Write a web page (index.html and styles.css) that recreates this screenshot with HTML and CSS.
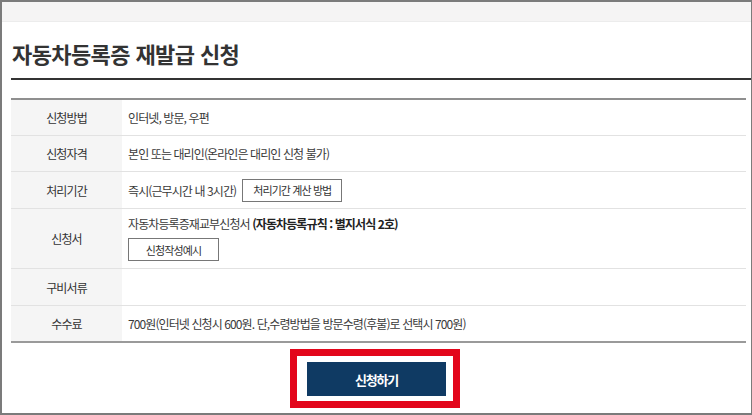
FILE: index.html
```html
<!DOCTYPE html>
<html lang="ko">
<head>
<meta charset="utf-8">
<title>자동차등록증 재발급 신청</title>
<link rel="stylesheet" href="styles.css">
</head>
<body>
<div class="frame">
  <div class="topband"></div>
  <div class="content">
    <h1 class="title">자동차등록증 재발급 신청</h1>
    <div class="info">
      <div class="row r1">
        <div class="th">신청방법</div>
        <div class="td">인터넷, 방문, 우편</div>
      </div>
      <div class="row r2">
        <div class="th">신청자격</div>
        <div class="td">본인 또는 대리인(온라인은 대리인 신청 불가)</div>
      </div>
      <div class="row r3">
        <div class="th">처리기간</div>
        <div class="td">즉시(근무시간 내 3시간) <span class="btn btn-calc">처리기간 계산 방법</span></div>
      </div>
      <div class="row r4">
        <div class="th">신청서</div>
        <div class="td td-stack">
          <div>자동차등록증재교부신청서 <b>(자동차등록규칙 : 별지서식 2호)</b></div>
          <span class="btn btn-example">신청작성예시</span>
        </div>
      </div>
      <div class="row r5">
        <div class="th">구비서류</div>
        <div class="td"></div>
      </div>
      <div class="row r6">
        <div class="th">수수료</div>
        <div class="td">700원(인터넷 신청시 600원. 단,수령방법을 방문수령(후불)로 선택시 700원)</div>
      </div>
    </div>
    <div class="actions">
      <div class="apply-wrap">
        <span class="apply">신청하기</span>
      </div>
    </div>
  </div>
</div>
</body>
</html>
```

FILE: styles.css
```css
* { box-sizing: border-box; }
html, body { margin: 0; padding: 0; background: #fff; }
body {
  font-family: "Noto Sans CJK KR", "Noto Sans", sans-serif;
  color: #333;
}
.frame {
  width: 752px;
  height: 415px;
  border: 2px solid #7b7b7b;
  border-right-width: 1px;
  overflow: hidden;
  background: #fff;
}
.topband {
  height: 20px;
  background: #f5f4f4;
  border-bottom: 1px solid #ececec;
}
.content {
  padding-left: 9px;
}
.title {
  margin: 0;
  padding: 18px 0 12px 1px;
  font-size: 22px;
  line-height: 26px;
  font-weight: 700;
  letter-spacing: -0.6px;
  color: #333;
  border-bottom: 2px solid #333;
}
.info {
  margin: 18px 5px 0 0;
  border-top: 2px solid #8f8f8f;
  border-bottom: 2px solid #9a9a9a;
}
.row {
  display: grid;
  grid-template-columns: 111px 1fr;
  border-bottom: 1px solid #e2e2e2;
  font-size: 12px;
  letter-spacing: -0.9px;
}
.row:last-child { border-bottom: 0; }
.r1, .r2, .r6 { height: 36px; }
.r6 { height: 35px; }
.r3, .r5 { height: 37px; }
.r4 { height: 60px; }
.th {
  background: #f5f5f5;
  display: flex;
  align-items: center;
  justify-content: center;
  color: #333;
}
.td {
  display: flex;
  align-items: center;
  padding-left: 6px;
  color: #3a3a3a;
}
.td b { font-weight: 700; color: #222; }
.td-stack {
  flex-direction: column;
  align-items: flex-start;
  justify-content: flex-start;
  padding-top: 6px;
  gap: 5px;
  line-height: 18px;
}
.btn {
  display: inline-flex;
  align-items: center;
  justify-content: center;
  height: 23px;
  border: 1px solid #777;
  background: #fff;
  font-size: 11px;
  color: #333;
}
.btn-calc { width: 100px; margin-left: 6px; }
.btn-example { width: 91px; }
.actions {
  display: flex;
  justify-content: center;
  padding-top: 19px;
  padding-right: 9px;
}
.apply-wrap {
  position: relative;
}
.apply-wrap::before {
  content: "";
  position: absolute;
  left: -17px;
  right: -14px;
  top: -13px;
  bottom: -12px;
  border: 7px solid #e3061b;
}
.apply {
  display: flex;
  align-items: center;
  justify-content: center;
  width: 139px;
  height: 34px;
  background: #0f3a63;
  color: #fff;
  font-size: 13px;
  font-weight: 700;
  letter-spacing: -1.2px;
}
```
